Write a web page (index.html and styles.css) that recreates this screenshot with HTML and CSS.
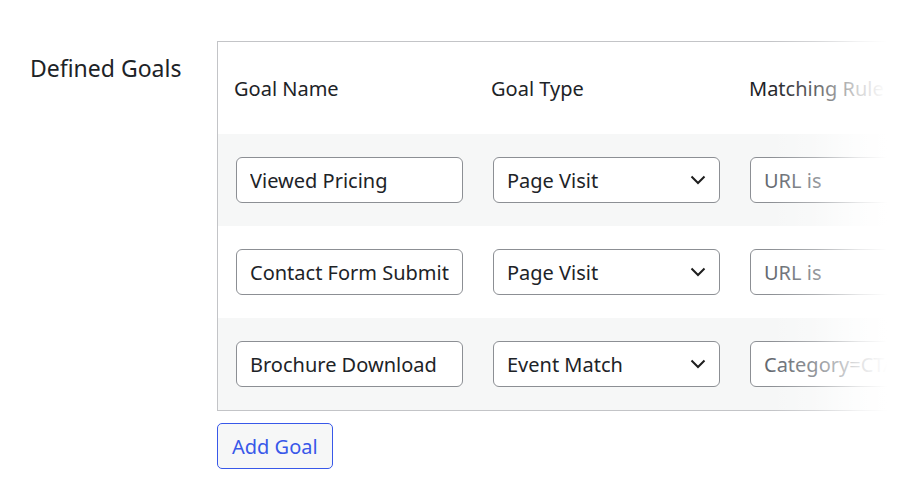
FILE: index.html
```html
<!DOCTYPE html>
<html lang="en">
<head>
<meta charset="utf-8">
<title>Goals</title>
<link rel="stylesheet" href="styles.css">
</head>
<body>
<div class="page">
  <div class="field-row">
    <div class="field-label">Defined Goals</div>
    <div class="field-body">
      <div class="goals-table">
        <div class="goals-row goals-head">
          <div class="head-cell">Goal Name</div>
          <div class="head-cell">Goal Type</div>
          <div class="head-cell">Matching Rule</div>
        </div>
        <div class="goals-row alt">
          <input class="text-input" type="text" value="Viewed Pricing">
          <div class="select-wrap">
            <select class="select-input"><option>Page Visit</option><option>Event Match</option></select>
            <svg class="chevron" width="16" height="10" viewBox="0 0 16 10"><path d="M1.5 1.5 L8 8 L14.5 1.5" fill="none" stroke="#1e1e1e" stroke-width="2"/></svg>
          </div>
          <input class="text-input rule" type="text" placeholder="URL is">
        </div>
        <div class="goals-row">
          <input class="text-input" type="text" value="Contact Form Submit">
          <div class="select-wrap">
            <select class="select-input"><option>Page Visit</option><option>Event Match</option></select>
            <svg class="chevron" width="16" height="10" viewBox="0 0 16 10"><path d="M1.5 1.5 L8 8 L14.5 1.5" fill="none" stroke="#1e1e1e" stroke-width="2"/></svg>
          </div>
          <input class="text-input rule" type="text" placeholder="URL is">
        </div>
        <div class="goals-row alt">
          <input class="text-input" type="text" value="Brochure Download">
          <div class="select-wrap">
            <select class="select-input"><option>Event Match</option><option>Page Visit</option></select>
            <svg class="chevron" width="16" height="10" viewBox="0 0 16 10"><path d="M1.5 1.5 L8 8 L14.5 1.5" fill="none" stroke="#1e1e1e" stroke-width="2"/></svg>
          </div>
          <input class="text-input rule" type="text" placeholder="Category=CTA">
        </div>
      </div>
      <button class="add-goal" type="button">Add Goal</button>
    </div>
  </div>
  <div class="edge-fade"></div>
</div>
</body>
</html>
```

FILE: styles.css
```css
html, body {
  margin: 0;
  padding: 0;
  background: #fff;
  overflow: hidden;
}

body {
  font-family: "Noto Sans", "Open Sans", sans-serif;
  font-size: 20px;
  color: #1d2327;
}

.page {
  position: relative;
  width: 900px;
  height: 494px;
  overflow: hidden;
}

.field-row {
  display: flex;
  padding: 41px 0 0 30px;
}

.field-label {
  width: 187px;
  flex: none;
  padding-top: 12px;
  font-size: 23px;
  line-height: 30px;
}

.field-body {
  display: flex;
  flex-direction: column;
  align-items: flex-start;
  gap: 12px;
}

.goals-table {
  width: 900px;
  border: 1px solid #c3c4c7;
}

.goals-row {
  display: grid;
  grid-template-columns: 227px 227px 227px;
  column-gap: 30px;
  align-items: center;
  height: 92px;
  padding-left: 18px;
  box-sizing: border-box;
}

.goals-row.alt {
  background: #f6f7f7;
}

.goals-head {
  padding-left: 16px;
  padding-top: 2px;
  column-gap: 0;
  grid-template-columns: 257px 258px 257px;
}

.head-cell {
  font-size: 20px;
  line-height: 28px;
}

.text-input,
.select-input {
  display: block;
  width: 227px;
  height: 46px;
  box-sizing: border-box;
  margin: 0;
  border: 1px solid #8c8f94;
  border-radius: 6px;
  background: #fff;
  font-family: inherit;
  font-size: 20px;
  color: #1d2327;
  padding: 0 13px;
  outline: none;
}

.text-input::placeholder {
  color: #646970;
}

.select-wrap {
  position: relative;
  width: 227px;
}

.select-input {
  appearance: none;
  -webkit-appearance: none;
  padding-right: 40px;
}

.chevron {
  position: absolute;
  right: 14px;
  top: 18px;
  pointer-events: none;
}

.add-goal {
  height: 46px;
  padding: 0 14px;
  border: 1px solid #3858e9;
  border-radius: 5px;
  background: #f6f7f7;
  color: #3858e9;
  font-family: inherit;
  font-size: 20px;
}

.edge-fade {
  position: absolute;
  top: 0;
  right: 0;
  bottom: 0;
  width: 130px;
  background: linear-gradient(to right, rgba(255,255,255,0) 0%, rgba(255,255,255,0.3) 35%, rgba(255,255,255,0.8) 68%, #fff 90%);
  pointer-events: none;
}
```
